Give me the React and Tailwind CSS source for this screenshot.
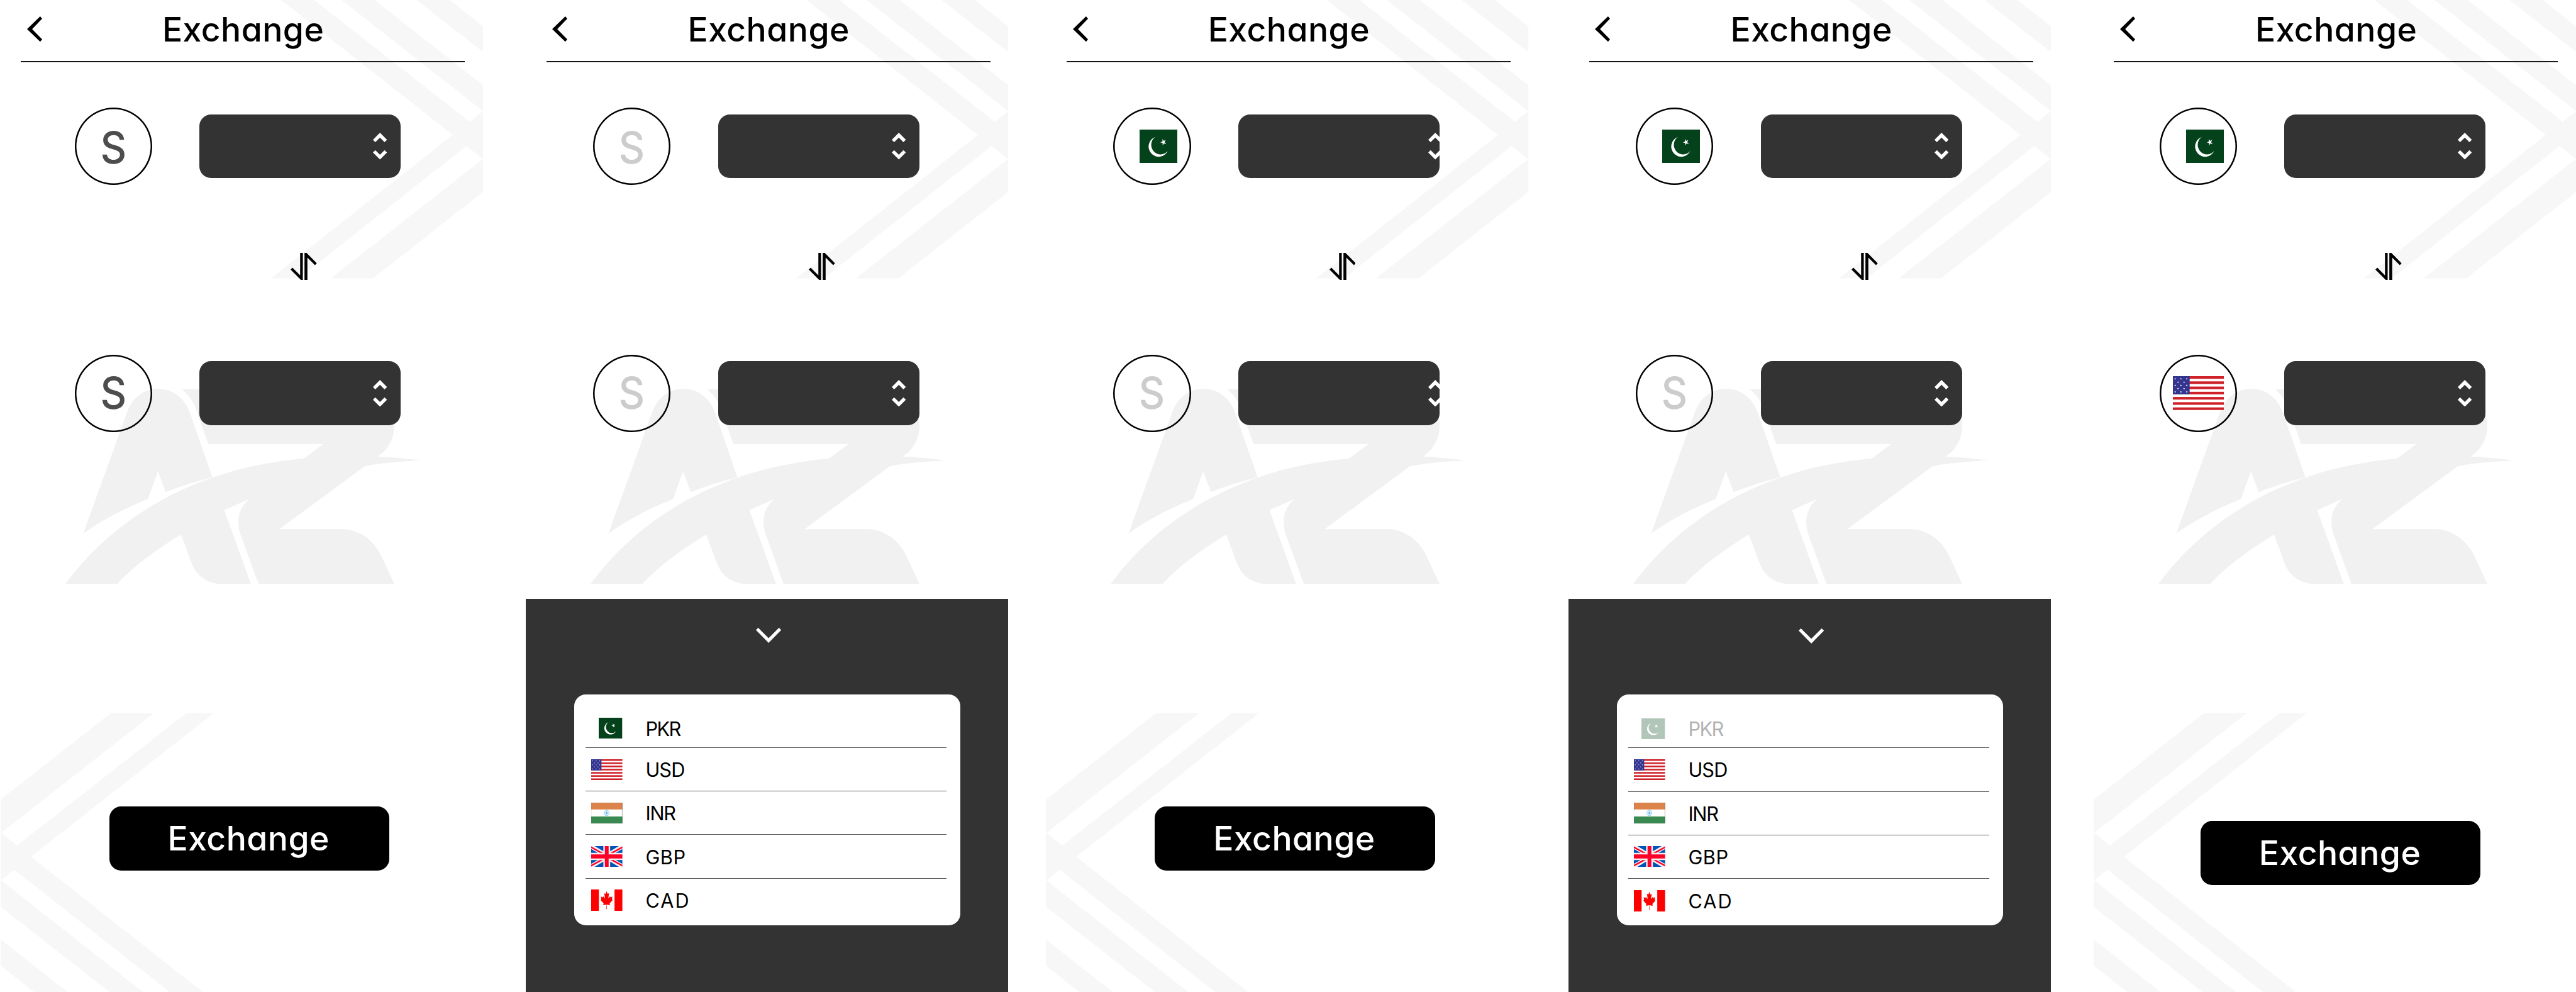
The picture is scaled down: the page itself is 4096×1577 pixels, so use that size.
const SCREENS = [
  {
    id: "start",
    frame: "ml-[0.6px]",
    group: "pl-[118.1px]",
    circleGap: "ml-[75.3px]",
    from: { kind: "symbol", tone: "text-[#4d4d4d]" },
    to: { kind: "symbol", tone: "text-[#4d4d4d]" },
    button: "top-[1282.2px] left-[173px]",
  },
  {
    id: "pick-first",
    frame: "ml-[68.4px]",
    group: "pl-[106.9px]",
    circleGap: "ml-[75.3px]",
    from: { kind: "symbol", tone: "text-[#cccccc]" },
    to: { kind: "symbol", tone: "text-[#cccccc]" },
    sheet: true,
    sheetTop: "top-[951.5px]",
  },
  {
    id: "first-set",
    frame: "ml-[60px]",
    group: "pl-[106.9px]",
    circleGap: "ml-[75.3px]",
    from: { kind: "pk" },
    to: { kind: "symbol", tone: "text-[#cccccc]" },
    chevrons: "left-[302px]",
    button: "top-[1282.2px] left-[173px]",
  },
  {
    id: "pick-second",
    frame: "ml-[63.6px]",
    group: "pl-[106.9px]",
    circleGap: "ml-[75.3px]",
    from: { kind: "pk" },
    to: { kind: "symbol", tone: "text-[#cccccc]" },
    sheet: true,
    sheetTop: "top-[951.8px]",
    usedCode: "PKR",
  },
  {
    id: "both-set",
    frame: "ml-[67.4px]",
    group: "pl-[104.8px]",
    circleGap: "ml-[75.3px]",
    from: { kind: "pk" },
    to: { kind: "us" },
    button: "top-[1305.2px] left-[170.2px]",
  },
];

const CURRENCIES = [
  { code: "PKR", flag: "pk", size: "h-[33px] w-[37.3px]", spacing: "tracking-[-1.6px]", row: "h-[85px] pt-[23.5px]" },
  { code: "USD", flag: "us", size: "h-[33px] w-[49.6px]", spacing: "tracking-[-0.9px]", row: "h-[69.2px]" },
  { code: "INR", flag: "in", size: "h-[33px] w-[49.6px]", spacing: "tracking-[-1.3px]", row: "h-[69.2px]" },
  { code: "GBP", flag: "gb", size: "h-[33px] w-[49.6px]", spacing: "tracking-[0.5px]", row: "h-[69.2px]" },
  { code: "CAD", flag: "ca", size: "h-[34px] w-[49.6px]", spacing: "tracking-[2px]", row: "h-[69.2px]" },
];

function PakistanFlag({ className }) {
  return (
    <svg className={className} viewBox="178 101 183 142" preserveAspectRatio="none">
      <rect x="178" y="101" width="183" height="142" fill="#04421b" />
      <path d="M254 132A48.5 43 0 1 0 314 191A45 40.3 0 1 1 254 132Z" fill="#fff" />
      <path
        d="M289 141L294.9 148.6L304 145L298.9 153.8L307 163L295.6 159.2L290 168L289 157.3L278 155L288.7 151.2Z"
        fill="#fff"
      />
    </svg>
  );
}

function Star({ x, y }) {
  return (
    <path
      transform={`translate(${x} ${y}) scale(5 4.4)`}
      d="M0-1L.24-.32L.95-.31L.38.12L.59.81L0 .4L-.59.81L-.38.12L-.95-.31L-.24-.32Z"
      fill="#fff"
    />
  );
}

function UsaFlag({ className }) {
  const stripes = [0, 2, 4, 6, 8, 10, 12];
  const wide = [11, 25, 38.5, 52.5, 66];
  return (
    <svg className={className} viewBox="0 0 243 142" preserveAspectRatio="none">
      <rect width="243" height="142" fill="#fff" />
      {stripes.map((i) => (
        <rect key={i} y={i * 10.92} width="243" height="10.92" fill="#cf2129" />
      ))}
      <rect width="80" height="76.4" fill="#32348f" />
      {wide.map((y, i) =>
        (i % 2 === 0 ? [11, 38.5, 66] : [24.5, 53.5]).map((x) => <Star key={x + "-" + y} x={x} y={y} />)
      )}
    </svg>
  );
}

function IndiaFlag({ className }) {
  const spokes = Array.from({ length: 12 }, (_, i) => (i * 15 * Math.PI) / 180);
  return (
    <svg className={className} viewBox="0 0 243 142" preserveAspectRatio="none">
      <rect width="243" height="142" fill="#fff" />
      <rect width="243" height="46.5" fill="#dc824b" />
      <rect y="94.5" width="243" height="47.5" fill="#388a50" />
      <ellipse cx="120.5" cy="70.5" rx="20.5" ry="19" fill="#fff" stroke="#3aa6e0" strokeWidth="2.6" />
      {spokes.map((a) => (
        <line
          key={a}
          x1={120.5 - 16 * Math.cos(a)}
          y1={70.5 - 15 * Math.sin(a)}
          x2={120.5 + 16 * Math.cos(a)}
          y2={70.5 + 15 * Math.sin(a)}
          stroke="#7cc4ea"
          strokeWidth="1.5"
        />
      ))}
      <ellipse cx="120.5" cy="70.5" rx="4.5" ry="4" fill="#1b86d0" />
      <path d="M0 142V.8H243" fill="none" stroke="#777" strokeOpacity=".6" strokeWidth="1.8" />
      <path d="M0 141.2H242V0" fill="none" stroke="#222" strokeOpacity=".75" strokeWidth="2.2" />
    </svg>
  );
}

function BritainFlag({ className }) {
  const corners = ["", "translate(243 0) scale(-1 1)", "translate(0 142) scale(1 -1)", "translate(243 142) scale(-1 -1)"];
  return (
    <svg className={className} viewBox="0 0 243 142" preserveAspectRatio="none">
      <rect width="243" height="142" fill="#f0f0f0" />
      {corners.map((t) => (
        <g key={t} transform={t}>
          <path d="M27 0H95V35ZM0 20L52 46H0Z" fill="#0052b8" />
          <path d="M0 2L93 46H68L0 14Z" fill="#ff0029" />
        </g>
      ))}
      <path d="M106.5 0H136V57H243V85H136V142H106.5V85H0V57H106.5Z" fill="#ff0029" />
    </svg>
  );
}

function CanadaFlag({ className }) {
  return (
    <svg className={className} viewBox="0 0 243 147" preserveAspectRatio="none">
      <rect width="243" height="147" fill="#fff" />
      <path
        d="M0 0H60V147H0ZM182 0H243V147H182ZM120.5 12L113 30L102 26L107 57L105 60L94 47L90 54L76 49L79 67L74 73L97 95L94 108L119.5 104L118.5 135H122.5L121.5 104L147 108L144 95L167 73L162 67L165 49L151 54L147 47L136 60L134 57L139 26L128 30Z"
        fill="#fe0000"
      />
    </svg>
  );
}

const FLAGS = { pk: PakistanFlag, us: UsaFlag, in: IndiaFlag, gb: BritainFlag, ca: CanadaFlag };

function Backdrop() {
  return (
    <>
      <svg
        className="absolute left-0 top-0 h-[479.3px] w-[767.2px]"
        viewBox="1 0 1506 1568"
        preserveAspectRatio="none"
        fill="#f7f7f7"
      >
        <path d="M877 0H980L1465 633L1507 578V828L1455 759L931 1448H845L1412 702Z" />
        <path d="M1065 0H1168L1507 443V578Z" />
        <path d="M1299 0H1402L1507 137V271Z" />
        <path d="M1507 826V998L1164 1448H1031Z" />
      </svg>
      <svg
        className="absolute left-0 top-[479.3px] h-[479.3px] w-[767.2px]"
        viewBox="1 0 1506 1568"
        preserveAspectRatio="none"
        fill="#f1f1f1"
      >
        <path d="M491 455C540 455 576 505 592 580L662 915Q580 950 516 992L492 883L461 1028Q345 1105 259 1207L395 580C410 505 447 455 491 455Z" />
        <path d="M567 457H1090C1170 457 1230 540 1230 645C1230 720 1208 775 1178 807Q1250 813 1312 828Q1220 833 1138 857L871 1185H1075C1120 1190 1165 1240 1188 1320L1230 1470H806L748 1205C738 1140 742 1080 776 1029L699 1086L782 1470H685C645 1465 610 1425 597 1360L564 1213Q430 1350 365 1470H203C300 1250 450 1040 662 917C750 865 840 835 948 817L1008 743H649L617 590C607 530 590 490 567 457Z" />
      </svg>
      <svg
        className="absolute left-0 top-[948px] h-[629px] w-[767.2px]"
        viewBox="1 0 1506 1568"
        preserveAspectRatio="none"
        fill="#f7f7f7"
      >
        <path d="M345 463H479L3 937L1 940V806Z" />
        <path d="M580 463H666L96 1032L632 1568H529L44 1084L1 1127V935L52 988Z" />
        <path d="M1 1124L445 1568H341L1 1230Z" />
        <path d="M1 1360L210 1568H106L1 1464Z" />
      </svg>
    </>
  );
}

function Header() {
  return (
    <header className="relative h-[99px] shrink-0">
      <div className="flex h-[97px] items-center">
        <svg className="mt-[-4.5px] ml-[42.3px] h-[40.4px] w-[24px]" viewBox="0 0 24 40.4">
          <path d="M0 20.2L20.9 0L24 3.8L8.1 20.2L24 36.6L20.9 40.4Z" fill="#000" />
        </svg>
        <h1 className="ml-[191px] mt-[-4px] text-[53.5px] leading-[64px] font-[550] tracking-[0.45px] text-black">Exchange</h1>
      </div>
      <div className="ml-[32.5px] h-[2px] w-[706px] bg-[linear-gradient(#000_50%,#555_50%)]" />
    </header>
  );
}

function Badge({ value, lower }) {
  return (
    <div className="relative flex h-[123px] w-[123.3px] shrink-0 items-center justify-center rounded-full shadow-[inset_0_0_0_2.5px_#000]">
      {value.kind === "symbol" && (
        <span
          className={`block scale-x-[0.93] text-[69.5px] leading-[84px] font-[550] ${value.tone} ${lower ? "" : "pt-[5px]"}`}
        >
          S
        </span>
      )}
      {value.kind === "pk" && <PakistanFlag className="ml-[21px] h-[53.5px] w-[60.2px]" />}
      {value.kind === "us" && <UsaFlag className="h-[53.8px] w-[81px]" />}
    </div>
  );
}

function AmountBox({ chevrons = "left-[276.2px]" }) {
  return (
    <div className="relative h-[101.6px] w-[320px] shrink-0 overflow-hidden rounded-[18.5px] bg-[#333333]">
      <svg className={`absolute top-[29.6px] h-[42.6px] w-[22.4px] ${chevrons}`} viewBox="764 50 126 240" fill="#fff">
        <path d="M827 50L890 113L868 134L827 93L785 134L764 113Z" />
        <path d="M827 290L890 227L868 206L827 247L785 206L764 227Z" />
      </svg>
    </div>
  );
}

function CurrencyRow({ screen, value, lower }) {
  return (
    <div className={`flex items-center ${screen.group}`}>
      <Badge value={value} lower={lower} />
      <div className={screen.circleGap}>
        <AmountBox chevrons={screen.chevrons} />
      </div>
    </div>
  );
}

function SwapIcon() {
  return (
    <svg className="ml-[343.3px] h-[43px] w-[41.7px]" viewBox="22 1128 235 242" preserveAspectRatio="none">
      <path d="M108 1128H132V1370H115L22 1277L39 1260L108 1329Z" />
      <path d="M147 1128H165L257 1221L241 1238L173 1170V1370H147Z" />
    </svg>
  );
}

function CurrencySheet({ top, usedCode }) {
  return (
    <section className={`absolute inset-x-0 bottom-0 flex flex-col items-center bg-[#333333] ${top}`}>
      <svg className="mt-[46.8px] ml-[4.5px] h-[24px] w-[40.2px] shrink-0" viewBox="0 0 40.2 24">
        <path d="M0 3.5L3.6 0L20.1 16.5L36.6 0L40.2 3.5L20.1 24Z" fill="#fff" />
      </svg>
      <ul className="mt-[81.8px] h-[367px] w-[614.4px] shrink-0 rounded-[18.5px] bg-white pr-[22px] pl-[18.8px]">
        {CURRENCIES.map((c, i) => {
          const Flag = FLAGS[c.flag];
          return (
            <li
              key={c.code}
              className={`flex items-center ${c.row} ${i < CURRENCIES.length - 1 ? "border-b border-[#555]" : ""}`}
            >
              <div className={`flex items-center ${c.code === usedCode ? "opacity-30" : ""}`}>
                <div className="flex w-[58.4px] justify-end">
                  <Flag className={c.size} />
                </div>
                <span className={`mt-[2px] ml-[36.7px] text-[30.7px] leading-[40px] text-black ${c.spacing}`}>{c.code}</span>
              </div>
            </li>
          );
        })}
      </ul>
    </section>
  );
}

function Screen({ screen }) {
  return (
    <main className={`relative h-[1577px] w-[767.2px] shrink-0 overflow-hidden ${screen.frame}`}>
      <Backdrop />
      <div className="relative flex flex-col">
        <Header />
        <div className="mt-[71.8px] flex flex-col">
          <CurrencyRow screen={screen} value={screen.from} />
          <div className={`mt-[108.4px] ${screen.group}`}>
            <SwapIcon />
          </div>
          <div className="mt-[118.4px]">
            <CurrencyRow screen={screen} value={screen.to} lower />
          </div>
        </div>
      </div>
      {screen.button && (
        <button
          className={`absolute flex h-[101.4px] w-[445.3px] items-center justify-center rounded-[18.5px] bg-black pt-px pr-[2px] text-[53.5px] leading-[64px] font-[550] tracking-[0.45px] text-white ${screen.button}`}
        >
          Exchange
        </button>
      )}
      {screen.sheet && <CurrencySheet top={screen.sheetTop} usedCode={screen.usedCode} />}
    </main>
  );
}

export default function App() {
  return (
    <div className="flex h-[1577px] w-[4096px] overflow-hidden bg-white font-['Inter',sans-serif] [font-feature-settings:'cv11']">
      {SCREENS.map((s) => (
        <Screen key={s.id} screen={s} />
      ))}
    </div>
  );
}
